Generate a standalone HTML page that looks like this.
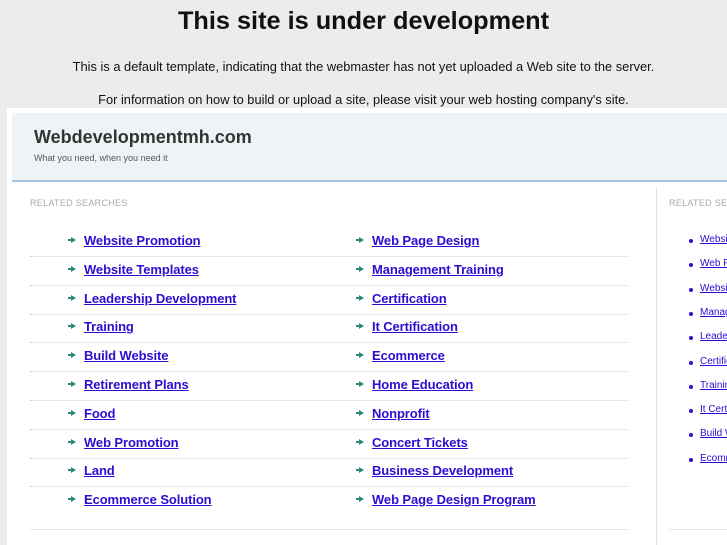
<!DOCTYPE html><html><head><style>
html,body{margin:0;width:727px;height:545px;overflow:hidden}
body{background:#ececec;font-family:"Liberation Sans",sans-serif;position:relative}
.a{position:absolute;white-space:nowrap}
h1{position:absolute;top:7px;left:0;width:727px;text-align:center;margin:0;font-size:25.3px;color:#111}
p{position:absolute;left:0;width:727px;text-align:center;margin:0;font-size:12.85px;color:#111}
#box{position:absolute;left:7px;top:108px;width:720px;height:437px;background:#fff}
#hd{position:absolute;left:12px;top:113px;width:715px;height:67px;background:#eef4f6;border-bottom:2px solid #a9c3e6}
.rs{font-size:9px;color:#aaa;letter-spacing:.3px}
.l{font-size:13px;font-weight:bold;color:#2a0fd0;text-decoration:underline;letter-spacing:-0.1px}
.ar{width:0;height:0;border-left:5px solid #2c8a7c;border-top:3px solid transparent;border-bottom:3px solid transparent}
.ar:before{content:"";position:absolute;left:-8px;top:-1px;width:4px;height:2px;background:#2c8a7c}
.sep{position:absolute;left:30px;width:598px;border-top:1px dotted #c5d3e6}
.r{font-size:10px;color:#2a0fd0;text-decoration:underline}
.d{width:4px;height:4px;border-radius:2px;background:#2a0fd0}
#wrap{position:absolute;left:0;top:0;width:727px;height:545px;overflow:hidden}
</style></head><body><div id="wrap">
<h1>This site is under development</h1>
<p style="top:59px">This is a default template, indicating that the webmaster has not yet uploaded a Web site to the server.</p>
<p style="top:92px">For information on how to build or upload a site, please visit your web hosting company's site.</p>
<div id="box"></div><div id="hd"></div>
<div class="a" style="left:34px;top:127px;font-size:18px;font-weight:bold;color:#333">Webdevelopmentmh.com</div>
<div class="a" style="left:34px;top:153px;font-size:9px;color:#555">What you need, when you need it</div>
<div class="a rs" style="left:30px;top:198px">RELATED SEARCHES</div>
<div class="a rs" style="left:669px;top:198px">RELATED SEARCHES</div>
<div class="a" style="left:656px;top:188px;height:357px;border-left:1px solid #d6e4f2"></div>
<div class="a" style="left:30px;top:529px;width:598px;border-top:1px solid #dde9f4"></div>
<div class="a" style="left:669px;top:529px;width:58px;border-top:1px solid #dde9f4"></div>
<div id="L"></div>
</div>
<script>
var c1=["Website Promotion","Website Templates","Leadership Development","Training","Build Website","Retirement Plans","Food","Web Promotion","Land","Ecommerce Solution"];
var c2=["Web Page Design","Management Training","Certification","It Certification","Ecommerce","Home Education","Nonprofit","Concert Tickets","Business Development","Web Page Design Program"];
var c3=["Website","Web Promotion","Website","Management","Leadership","Certification","Training","It Certification","Build Website","Ecommerce"];
var h="";
for(var i=0;i<10;i++){var y=233+i*28.8;
h+='<div class="a ar" style="left:71px;top:'+(y+4)+'px"></div><div class="a l" style="left:84px;top:'+y+'px">'+c1[i]+'</div>';
h+='<div class="a ar" style="left:359px;top:'+(y+4)+'px"></div><div class="a l" style="left:372px;top:'+y+'px">'+c2[i]+'</div>';
if(i<9)h+='<div class="sep" style="top:'+(y+23)+'px"></div>';
var z=234+i*24.3;
h+='<div class="a d" style="left:689px;top:'+(z+5)+'px"></div><div class="a r" style="left:700px;top:'+z+'px">'+c3[i]+'</div>';}
document.getElementById("L").innerHTML=h;
</script>
</body></html>
